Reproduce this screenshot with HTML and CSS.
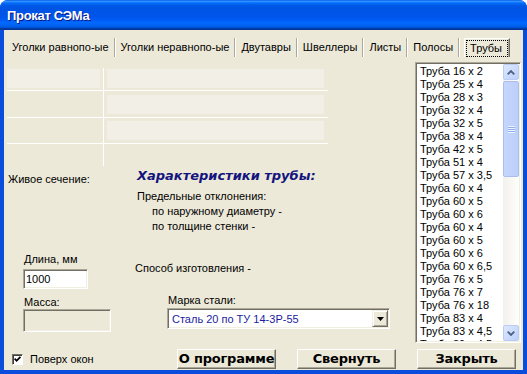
FILE: index.html
```html
<!DOCTYPE html>
<html>
<head>
  <meta charset="utf-8">
  <title>Прокат СЭМа</title>
  <link rel="stylesheet" href="styles.css">
</head>
<body>
  <div class="window">
    <div class="titlebar">Прокат СЭМа</div>
    <div class="frame">
      <div class="client">

        <!-- tab strip -->
        <div class="tabs">
          <div class="tab first">Уголки равнопо-ые</div>
          <div class="tab">Уголки неравнопо-ые</div>
          <div class="tab">Двутавры</div>
          <div class="tab">Швеллеры</div>
          <div class="tab">Листы</div>
          <div class="tab">Полосы</div>
          <div class="tab active"><span>Трубы</span></div>
        </div>

        <div class="page">
          <div class="form">
            <!-- empty property table -->
            <div class="props">
              <div class="cell"><div class="field left"></div></div>
              <div class="cell"><div class="field"></div></div>
              <div class="cell"></div>
              <div class="cell"><div class="field mid"></div></div>
              <div class="cell"></div>
              <div class="cell"><div class="field low"></div></div>
              <div class="cell"></div>
              <div class="cell"></div>
            </div>

            <div class="details">
              <div class="col-a">
                <div class="label live">Живое сечение:</div>
                <div class="label len">Длина, мм</div>
                <div class="edit len-edit">1000</div>
                <div class="label mass">Масса:</div>
                <div class="edit mass-edit"></div>
              </div>
              <div class="col-b">
                <div class="heading">Характеристики трубы:</div>
                <div class="limits">
                  <div>Предельные отклонения:</div>
                  <div class="sub">по наружному диаметру -</div>
                  <div class="sub">по толщине стенки -</div>
                </div>
                <div class="label method">Способ изготовления -</div>
                <div class="label grade">Марка стали:</div>
                <div class="combo">
                  <span>Сталь 20 по ТУ 14-3Р-55</span>
                  <div class="drop">
                    <svg width="7" height="4" viewBox="0 0 7 4"><path d="M0 0h7L3.5 4z" fill="#000"/></svg>
                  </div>
                </div>
              </div>
            </div>
          </div>

          <!-- pipe list -->
          <div class="listbox">
            <div class="items">
              <div>Труба 16 x 2</div>
              <div>Труба 25 x 4</div>
              <div>Труба 28 x 3</div>
              <div>Труба 32 x 4</div>
              <div>Труба 32 x 5</div>
              <div>Труба 38 x 4</div>
              <div>Труба 42 x 5</div>
              <div>Труба 51 x 4</div>
              <div>Труба 57 x 3,5</div>
              <div>Труба 60 x 4</div>
              <div>Труба 60 x 5</div>
              <div>Труба 60 x 6</div>
              <div>Труба 60 x 4</div>
              <div>Труба 60 x 5</div>
              <div>Труба 60 x 6</div>
              <div>Труба 60 x 6,5</div>
              <div>Труба 76 x 5</div>
              <div>Труба 76 x 7</div>
              <div>Труба 76 x 18</div>
              <div>Труба 83 x 4</div>
              <div>Труба 83 x 4,5</div>
              <div>Труба 89 x 4,5</div>
            </div>
            <div class="scrollbar">
              <div class="sb-btn">
                <svg width="8" height="5" viewBox="0 0 8 5"><path d="M0.7 4.3L4 1L7.3 4.3" stroke="#4D6185" stroke-width="1.8" fill="none"/></svg>
              </div>
              <div class="thumb">
                <div class="grip"></div>
              </div>
              <div class="track"></div>
              <div class="sb-btn">
                <svg width="8" height="5" viewBox="0 0 8 5"><path d="M0.7 0.7L4 4L7.3 0.7" stroke="#4D6185" stroke-width="1.8" fill="none"/></svg>
              </div>
            </div>
          </div>
        </div>

        <div class="footer">
          <div class="check">
            <div class="box">
              <svg width="7" height="7" viewBox="0 0 7 7"><path d="M0.6 2.6L2.6 4.8L6.4 0.8" stroke="#000" stroke-width="1.8" fill="none"/></svg>
            </div>
            Поверх окон
          </div>
          <div class="btn">О программе</div>
          <div class="btn">Свернуть</div>
          <div class="btn">Закрыть</div>
        </div>

      </div>
    </div>
  </div>
</body>
</html>
```

FILE: styles.css
```css
/* XP-style dialog "Прокат СЭМа" */

body {
  margin: 0;
  font-family: "Liberation Sans", Arial, sans-serif;
  font-size: 11px;
  color: #000;
}

.window {
  width: 527px;
  height: 374px;
  display: flex;
  flex-direction: column;
  background: #0A4CDB;
  border-radius: 8px 8px 0 0;
  overflow: hidden;
}

.titlebar {
  height: 28px;
  padding: 2px 0 0 7px;
  line-height: 28px;
  font: bold 13px/28px "Liberation Sans", Arial, sans-serif;
  letter-spacing: -0.3px;
  color: #fff;
  text-shadow: 1px 1px 0 #0A1883;
  background: linear-gradient(to bottom, #0058EE 0%, #3593FF 4%, #288EFF 6%, #127DFF 8%, #036FFC 10%, #0262EE 14%, #0057E5 20%, #0054E3 24%, #0055EB 56%, #005BF5 66%, #026AFE 76%, #0062EF 86%, #0052D6 92%, #0040AB 94%, #003092 100%);
}

.frame {
  flex: 1;
  padding: 0 4px 4px;
}

.client {
  height: 340px;
  background: #ECE9D8;
  display: flex;
  flex-direction: column;
}

/* ---- tabs ---- */

.tabs {
  display: flex;
  height: 19px;
  margin: 8px 0 0 2px;
  line-height: 19px;
}

.tab {
  padding: 0 5px;
  border-right: 1px solid #ACA899;
  box-shadow: 1px 0 0 #fff;
  margin-right: 1px;
  white-space: nowrap;
}

.tab.first {
  padding-left: 6px;
}

.tab.active {
  margin-left: 4px;
  padding: 1px 1px 0 1px;
  border: 1px solid;
  border-color: #fff #716F64 transparent #fff;
  border-bottom: 0;
  box-shadow: inset -1px 0 0 #ACA899;
}

.tab.active span {
  display: block;
  border: 1px dotted #000;
  padding: 0 5px 0 3px;
  line-height: 15px;
}

/* ---- main page ---- */

.page {
  display: flex;
  height: 288px;
}

.form {
  width: 411px;
}

.props {
  display: grid;
  grid-template-columns: 96px 224px;
  grid-template-rows: 22px 26px 25px 22px;
  gap: 1px;
  width: 321px;
  margin: 11px 0 0 3px;
  background: #fff;
}

.cell {
  background: #ECE9D8;
}

.field {
  height: 19px;
  margin: 1px 4px 0 3px;
  background: #F1EFE6;
}

.field.left {
  margin: 1px 3px 0 0;
}

.field.mid {
  margin-top: 4px;
}

.field.low {
  margin-top: 3px;
}

.details {
  display: flex;
}

.col-a {
  width: 129px;
}

.col-b {
  flex: 1;
}

.label {
  line-height: 13px;
  white-space: nowrap;
}

.live {
  margin: 7px 0 0 4px;
}

.len {
  margin: 67px 0 0 20px;
}

.mass {
  margin: 7px 0 0 20px;
}

.edit {
  box-sizing: border-box;
  border: 1px solid;
  border-color: #ACA899 #fff #fff #ACA899;
  box-shadow: inset 1px 1px 0 #716F64, inset -1px -1px 0 #F1EFE2;
}

.len-edit {
  width: 65px;
  height: 20px;
  margin: 3px 0 0 19px;
  padding: 1px 0 0 2px;
  line-height: 16px;
  background: #fff;
}

.mass-edit {
  width: 88px;
  height: 23px;
  margin-left: 19px;
  background: #ECE9D8;
}

.heading {
  margin: 2px 0 0 4px;
  font: italic bold 13px/15px "DejaVu Sans", Verdana, sans-serif;
  color: #14147F;
  white-space: nowrap;
}

.limits {
  margin: 6px 0 0 4px;
  line-height: 15px;
}

.limits .sub {
  padding-left: 15px;
}

.method {
  margin: 28px 0 0 2px;
}

.grade {
  margin: 19px 0 0 35px;
}

.combo {
  display: flex;
  width: 223px;
  height: 21px;
  box-sizing: border-box;
  margin: 1px 0 0 34px;
  padding: 1px;
  background: #fff;
  border: 1px solid;
  border-color: #ACA899 #fff #fff #ACA899;
  box-shadow: inset 1px 1px 0 #716F64, inset -1px -1px 0 #F1EFE2;
}

.combo span {
  flex: 1;
  padding: 1px 0 0 3px;
  line-height: 16px;
  color: #1C1CA0;
  white-space: nowrap;
}

.drop {
  width: 16px;
  height: 17px;
  box-sizing: border-box;
  display: flex;
  align-items: center;
  justify-content: center;
  background: #ECE9D8;
  border: 1px solid;
  border-color: #F1EFE2 #716F64 #716F64 #F1EFE2;
  box-shadow: inset 1px 1px 0 #fff, inset -1px -1px 0 #ACA899;
}

/* ---- list ---- */

.listbox {
  display: flex;
  width: 106px;
  height: 281px;
  box-sizing: border-box;
  margin-top: 5px;
  padding: 1px;
  background: #fff;
  border: 1px solid;
  border-color: #ACA899 #fff #fff #ACA899;
  box-shadow: inset 1px 1px 0 #716F64, inset -1px -1px 0 #F1EFE2;
}

.items {
  flex: 1;
  overflow: hidden;
  padding: 1px 0 0 3px;
  line-height: 13px;
  white-space: nowrap;
}

.scrollbar {
  width: 16px;
  display: flex;
  flex-direction: column;
  background: linear-gradient(to right, #F3F1EC, #FEFEFB);
}

.sb-btn {
  height: 16px;
  box-sizing: border-box;
  display: flex;
  align-items: center;
  justify-content: center;
  border: 1px solid #B9CCF5;
  border-radius: 2px;
  background: linear-gradient(135deg, #DDE8FE, #BCD0FA);
}

.thumb {
  height: 96px;
  margin-top: 1px;
  box-sizing: border-box;
  display: flex;
  align-items: center;
  justify-content: center;
  border: 1px solid #A9BEF0;
  border-radius: 2px;
  background: linear-gradient(to right, #C6D6FC, #BCCFFA);
}

.grip {
  width: 7px;
  height: 7px;
  background: repeating-linear-gradient(to bottom, #EEF4FE 0 1px, #8CB0F8 1px 2px);
}

.track {
  flex: 1;
}

/* ---- footer ---- */

.footer {
  display: flex;
  align-items: center;
  height: 20px;
  margin-top: 4px;
}

.check {
  display: flex;
  align-items: center;
  width: 173px;
  box-sizing: border-box;
  padding-left: 8px;
}

.box {
  width: 11px;
  height: 11px;
  box-sizing: border-box;
  display: flex;
  align-items: center;
  justify-content: center;
  margin-right: 7px;
  background: #fff;
  border: 1px solid;
  border-color: #716F64 #fff #fff #716F64;
  box-shadow: inset 1px 1px 0 #404040;
}

.btn {
  width: 99px;
  height: 20px;
  box-sizing: border-box;
  margin-right: 21px;
  padding-top: 1px;
  text-align: center;
  font: bold 13px/16px "DejaVu Sans", Verdana, sans-serif;
  letter-spacing: -0.2px;
  white-space: nowrap;
  background: #ECE9D8;
  border: 1px solid;
  border-color: #fff #716F64 #716F64 #fff;
  box-shadow: inset -1px -1px 0 #ACA899;
}

.btn:last-child {
  margin-right: 0;
}
```
